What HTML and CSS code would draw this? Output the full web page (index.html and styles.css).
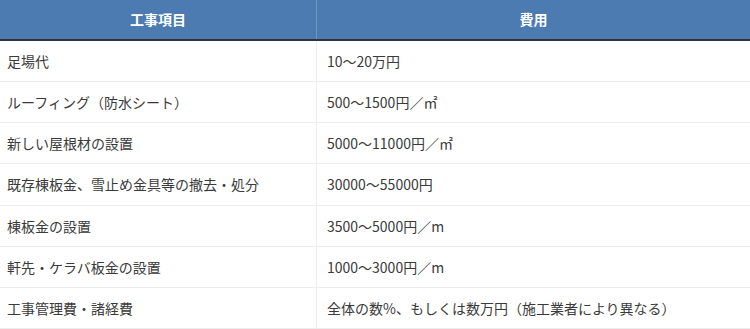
FILE: index.html
```html
<!DOCTYPE html>
<html lang="ja">
<head>
<meta charset="utf-8">
<link rel="stylesheet" href="styles.css">
</head>
<body>
<table class="cost">
  <thead>
    <tr><th class="c1">工事項目</th><th class="c2">費用</th></tr>
  </thead>
  <tbody>
    <tr><td class="c1">足場代</td><td class="c2">10〜20万円</td></tr>
    <tr><td class="c1">ルーフィング（防水シート）</td><td class="c2">500〜1500円／㎡</td></tr>
    <tr><td class="c1">新しい屋根材の設置</td><td class="c2">5000〜11000円／㎡</td></tr>
    <tr><td class="c1">既存棟板金、雪止め金具等の撤去・処分</td><td class="c2">30000〜55000円</td></tr>
    <tr><td class="c1">棟板金の設置</td><td class="c2">3500〜5000円／m</td></tr>
    <tr><td class="c1">軒先・ケラバ板金の設置</td><td class="c2">1000〜3000円／m</td></tr>
    <tr><td class="c1">工事管理費・諸経費</td><td class="c2">全体の数%、もしくは数万円（施工業者により異なる）</td></tr>
  </tbody>
</table>
</body>
</html>
```
FILE: styles.css
```css
html, body {
  margin: 0;
  padding: 0;
  background: #fff;
}
body {
  font-family: "Noto Sans CJK JP", "Noto Sans", sans-serif;
  font-size: 14px;
  color: #3a3a3a;
}
.cost {
  width: 750px;
  border-collapse: collapse;
  table-layout: fixed;
}
.cost th {
  background: #4b7bb1;
  color: #fff;
  font-weight: bold;
  line-height: 20px;
  padding: 9px 0 10px;
  text-align: center;
  border-bottom: 2px solid #2f3439;
}
.cost th.c1 {
  width: 316px;
  border-right: 1px solid #6e96c4;
}
.cost td {
  line-height: 20.15px;
  padding: 10px 0 10px 10px;
  text-align: left;
  border-bottom: 1px solid #ededed;
  white-space: nowrap;
}
.cost td.c1 {
  padding-left: 7px;
  border-right: 1px solid #ededed;
}
```
